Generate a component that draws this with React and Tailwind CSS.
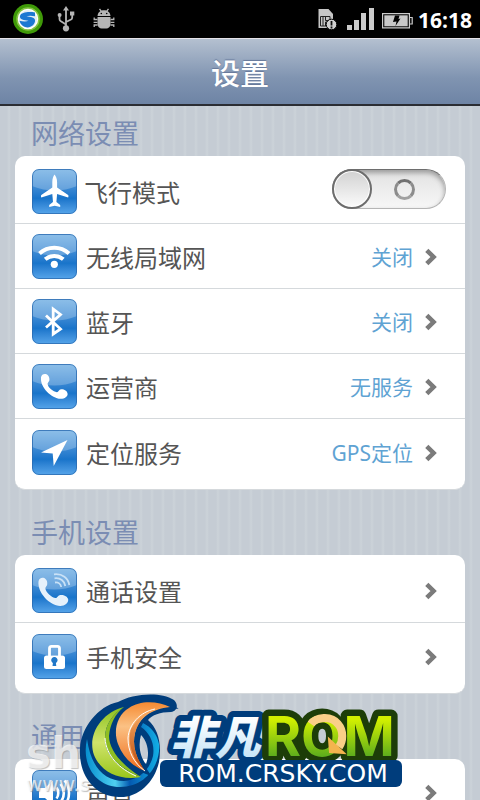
import React, { useState } from "react";

const networkRows = [
  { id: "wifi", label: "无线局域网", value: "关闭" },
  { id: "bluetooth", label: "蓝牙", value: "关闭" },
  { id: "carrier", label: "运营商", value: "无服务" },
  { id: "location", label: "定位服务", value: "GPS定位" },
];

const phoneRows = [
  { id: "call", label: "通话设置" },
  { id: "security", label: "手机安全" },
];

const generalRows = [{ id: "sound", label: "声音" }];

// White glyphs, all drawn on a 45x45 tile
const glyphs = {
  airplane: (
    <path
      fill="#fff"
      d="M22.5 5.5c1.5 1.8 2.6 4.4 2.6 7.500v5.500l11 7.600c.5.500.5 1.600 0 2.400l-11-3.500-.7 8 3.800 3v2l-5.500-1.200-5.500 1.200v-2l3.800-3-.7-8-11 3.500c-.5-.8-.5-1.900 0-2.400l11-7.600V13c0-3.100.9-5.700 2.200-7.500z"
    />
  ),
  wifi: (
    <g fill="none" stroke="#fff" strokeWidth="4">
      <path d="M7.500 19.500a22 22 0 0 1 29.500 0" />
      <path d="M13.200 25.300a13.800 13.800 0 0 1 18.100 0" />
      <circle cx="22.300" cy="30.300" r="3.600" fill="#fff" stroke="none" />
    </g>
  ),
  bluetooth: (
    <path
      fill="none"
      stroke="#fff"
      strokeWidth="2.800"
      d="M14 16.500l14.500 13.500-7.300 5V10l7.300 5.500L14 28.500"
    />
  ),
  carrier: (
    <path
      fill="#fff"
      d="M9 13.500c.3-2.800 2.500-3.800 4.500-3.500 2.800.5 4.300 3.700 3.900 6.300-.3 1.700-1.900 2.300-1.800 3.700.3 3.500 5.700 7.700 9.300 8.200 1.600.1 2-2.600 4.100-2.900 2.800-.3 6.200 1.400 6.600 4.400.3 2.900-3.100 5.200-7 5.100C19.500 34.600 8 23.500 9 13.500z"
    />
  ),
  location: <path fill="#fff" d="M35.500 10L21.700 36l-1-12.600L9 22.500z" />,
  call: (
    <>
      <path
        fill="#e6f1fb"
        d="M6.500 13.500c.4-3 2.600-4 4.800-3.700 3 .6 4.400 4 3.900 6.700-.3 1.800-1.900 2.500-1.800 4 .3 3.800 6.200 9.200 10.300 9.500 1.800.1 2.300-2.800 4.600-3 3.600-.3 7.400 1.300 7.900 4.600.3 3.500-3.400 6.500-8 6.400C17.500 37.500 5.300 24.500 6.500 13.500z"
      />
      <g fill="none" stroke="#c9e1f6" strokeWidth="1.800">
        <path d="M23 14.500c3.200-.4 5.800 1.500 6.200 4.500" />
        <path d="M22.500 10.300c6-.8 10 2.800 10.800 7.700" />
        <path d="M22 6.300c8.500-1 14.200 4 15.300 10.700" />
      </g>
    </>
  ),
  security: (
    <>
      <path
        fill="none"
        stroke="#fff"
        strokeWidth="2.800"
        d="M17.500 23v-8.500c0-1.500.7-2.200 2-2.200h6c1.300 0 2 .7 2 2.200V23"
      />
      <rect x="12" y="21.500" width="21" height="13.500" rx="2.500" fill="#fff" />
      <path fill="#2178c9" d="M20.500 32l.4-3a3.200 3.200 0 1 1 3 0l.4 3z" />
    </>
  ),
  sound: (
    <>
      <path fill="#fff" d="M7 18h6l8-7.500v25L13 28H7z" />
      <g fill="none" stroke="#fff" strokeWidth="2.600">
        <path d="M24.500 17.500c2.400 3 2.400 8 0 11" />
        <path d="M28.500 14c4.400 5 4.400 13 0 18" />
        <path d="M32.500 10.500c6 7 6 18 0 25" />
      </g>
    </>
  ),
};

function Tile({ name }) {
  return (
    <svg
      viewBox="0 0 45 45"
      className="size-[45px] shrink-0 rounded-[7px] bg-linear-to-b from-[#69abe2] via-[#1874ca] via-65% to-[#56a5ea]"
      aria-hidden="true"
    >
      <path d="M0 0h45v17Q22.500 26 0 17z" fill="#fff" opacity=".24" />
      {glyphs[name]}
      <rect
        x=".5"
        y=".5"
        width="44"
        height="44"
        rx="6.500"
        fill="none"
        stroke="#2c6cb0"
        strokeOpacity=".8"
      />
    </svg>
  );
}

function Chevron() {
  return (
    <svg viewBox="0 0 12 18" className="h-[18px] w-3 shrink-0" aria-hidden="true">
      <path
        d="M1.800 2.300L8.600 9l-6.800 6.700"
        fill="none"
        stroke="#7b7b7b"
        strokeWidth="4.500"
      />
    </svg>
  );
}

function Row({ row }) {
  return (
    <li className="border-b border-[#d5d9dc] pt-2.5 pb-[9px] first:pt-[13px] last:border-b-0 last:pt-[11px] last:pb-3.5">
      <button type="button" className="flex w-full items-center pr-7 pl-[17px] text-left">
        <Tile name={row.id} />
        <span className="ml-[9px] flex-1 pt-0.5 text-2xl leading-8 text-[#555]">
          {row.label}
        </span>
        {row.value && (
          <span className="mr-3 text-[21px] leading-8 text-[#5fa3d3]">
            {row.value}
          </span>
        )}
        <Chevron />
      </button>
    </li>
  );
}

function Section({ title, rows, children }) {
  return (
    <section className="mb-[15px]">
      <h2 className="flex h-[50px] items-center pt-1.5 pl-4 text-[27px] leading-9 text-[#7b8db3]">
        {title}
      </h2>
      <ul className="overflow-hidden rounded-[10px] border-b border-[#d5d9dc] bg-white">
        {children}
        {rows.map((row) => (
          <Row key={row.id} row={row} />
        ))}
      </ul>
    </section>
  );
}

function AirplaneRow() {
  const [on, setOn] = useState(false);

  return (
    <li className="flex items-center border-b border-[#d5d9dc] pt-[13px] pr-[19px] pb-[9px] pl-[17px]">
      <Tile name="airplane" />
      <label
        htmlFor="airplane"
        className="ml-[7px] flex-1 pt-0.5 text-2xl leading-8 text-[#555]"
      >
        飞行模式
      </label>
      <span className="grid h-10 w-[114px] items-center self-start">
        <input
          id="airplane"
          type="checkbox"
          checked={on}
          onChange={(e) => setOn(e.target.checked)}
          className="peer col-start-1 row-start-1 h-10 w-full appearance-none rounded-full border border-[#b5b5b5] border-t-[#6e6e6e] bg-linear-to-b from-[#e2e2e2] to-[#f7f7f7] shadow-[inset_0_3px_5px_#9c9c9c]"
        />
        {/* the "off" ring */}
        <span className="pointer-events-none col-start-1 row-start-1 mr-[31px] size-[21px] justify-self-end rounded-full border-3 border-[#8c8c8c] border-t-[#707070] border-b-[#a0a0a0] peer-checked:mr-[70px]" />
        <span className="pointer-events-none col-start-1 row-start-1 size-10 rounded-full border-2 border-[#6d6d6d] bg-linear-to-b from-[#d2d2d2] to-[#fbfbfb] shadow-[inset_0_0_0_1px_#fff] peer-checked:justify-self-end" />
      </span>
    </li>
  );
}

function StatusBar() {
  return (
    <div className="flex h-[38px] items-center bg-black pr-2 pl-[13px]">
      {/* Security app */}
      <svg viewBox="0 0 30 30" className="size-[30px]" aria-hidden="true">
        <circle cx="15" cy="15" r="15" fill="#3f9a08" />
        <circle cx="15" cy="15" r="11" fill="#fff" stroke="#85c445" strokeWidth="1.500" />
        <circle cx="15" cy="15" r="9" fill="#e3edf5" />
        <path
          d="M22 8.500c-6-1-14-.5-15 3.500-.6 3.800 4 4 8.500 4.800-2 1-6 .8-9 0 1 4.500 5 6.700 8 6.700 4-.2 8-3.500 7.500-7.500-.5-3-5-3-8.500-3.700 2-.8 5.500-.7 8.500 0z"
          fill="#1c78d2"
        />
      </svg>
      {/* USB */}
      <svg viewBox="0 0 18 26" className="ml-3.5 h-[26px] w-[18px]" aria-hidden="true">
        <g fill="none" stroke="#b5b5b5" strokeWidth="1.800">
          <path d="M9 3v20M9 18.500l-5.500-3.500c-.7-.5-1-1-1-2V10M9 16l5-2.500c.9-.5 1.200-1 1.200-2V8" />
        </g>
        <g fill="#b5b5b5">
          <path d="M9 0l3 4.500H6z" />
          <circle cx="9" cy="22.300" r="3.100" />
          <circle cx="2.600" cy="9" r="2" />
          <path d="M13 5.500h4.300v4H13z" />
        </g>
      </svg>
      {/* Debugging */}
      <svg viewBox="0 0 22 22" className="ml-[18px] size-[22px]" aria-hidden="true">
        <g fill="#b5b5b5">
          <path d="M4.500 8c.3-3.800 3-5.800 6.500-5.800s6.200 2 6.500 5.800z" />
          <path d="M4.500 9h13v7.500c0 2.300-2.200 4-4 4h-5c-1.800 0-4-1.700-4-4z" />
        </g>
        <g fill="none" stroke="#b5b5b5" strokeWidth="1.300">
          <path d="M6.500.800l1.700 2.400M15.500.800l-1.700 2.400M4.500 11.500H1.200V9.500M4.500 14.300H.600M4.500 17H1.200v2M17.500 11.500h3.300V9.500M17.500 14.300h3.900M17.500 17h3.300v2" />
        </g>
        <circle cx="8.300" cy="5.500" r=".8" />
        <circle cx="13.700" cy="5.500" r=".8" />
      </svg>
      {/* SIM warning */}
      <svg viewBox="0 0 19 22" className="ml-auto h-[22px] w-[19px]" aria-hidden="true">
        <path d="M.500 1h10l4.500 5v14H.500z" fill="#c6c6c6" />
        <path
          d="M2.500 8.500h9.500v9.500h-9.500zM5 8.500V18M7.500 8.500v4h5M7.500 18v-4h2"
          fill="none"
          stroke="#222"
        />
        <circle cx="13.500" cy="16.500" r="5.300" fill="#d0d0d0" stroke="#000" />
        <path d="M13.500 13v4.500M13.500 18.500v2" stroke="#111" strokeWidth="1.800" />
      </svg>
      {/* Signal */}
      <svg viewBox="0 0 27 22" className="ml-2.5 h-[22px] w-[27px]" aria-hidden="true">
        <path
          d="M0 17h5v5H0zM7 12h5v10H7zM14 5h5v17h-5zM22 0h5v22h-5z"
          fill="#cbcbcb"
        />
      </svg>
      {/* Charging battery */}
      <svg viewBox="0 0 31 16" className="mt-1 ml-2 h-4 w-[31px]" aria-hidden="true">
        <path
          d="M.600.600h26.800v14.300H.600zM27.500 4.500h2.700v6.500h-2.700z"
          fill="none"
          stroke="#cbcbcb"
          strokeWidth="1.200"
        />
        <path d="M2.300 2.300h23.400v11H2.300z" fill="#c8c8c8" />
        <path d="M13 2.500h4.500l-1 3.500 2-.5-5 7.500 1-4.500-3.500.500z" fill="#000" />
      </svg>
      <time className="ml-[5px] pt-0.5 font-['Open_Sans',sans-serif] text-[21px] leading-6 font-bold text-white">
        16:18
      </time>
    </div>
  );
}

// Site banner that floats over the bottom of the list
function Banner() {
  return (
    <div className="pointer-events-none absolute inset-x-0 bottom-0 flex justify-center">
      <svg viewBox="75 692 330 108" className="h-[108px] w-[330px]">
        <defs>
          <linearGradient id="orange" x1="0" y1="0" x2="0" y2="1">
            <stop offset="0" stopColor="#f58a32" />
            <stop offset=".35" stopColor="#fbc184" />
            <stop offset="1" stopColor="#ee6c1c" />
          </linearGradient>
          <linearGradient id="orangeDark" x1="0" y1="0" x2="0" y2="1">
            <stop offset="0" stopColor="#fbb067" />
            <stop offset="1" stopColor="#b8470b" />
          </linearGradient>
          <linearGradient id="lime" x1="0" y1="0" x2="0" y2="1">
            <stop offset="0" stopColor="#8cc21f" />
            <stop offset=".5" stopColor="#cfe36a" />
            <stop offset="1" stopColor="#9ac61c" />
          </linearGradient>
          <linearGradient id="ring" x1="0" y1="0" x2="1" y2="0">
            <stop offset="0" stopColor="#0790d0" />
            <stop offset=".4" stopColor="#4fd0f0" />
            <stop offset=".6" stopColor="#0459b0" />
            <stop offset="1" stopColor="#12b0e6" />
          </linearGradient>
          <linearGradient id="ice" x1="0" y1="0" x2="0" y2="1">
            <stop offset="0.200" stopColor="#fff" />
            <stop offset="1" stopColor="#b9def5" />
          </linearGradient>
          <linearGradient id="green" x1="0" y1="0" x2="0" y2="1">
            <stop offset=".25" stopColor="#d2f000" />
            <stop offset=".8" stopColor="#5fae1c" />
          </linearGradient>
        </defs>

        {/* Swirl */}
        <path
          fill="#003d7c"
          fillRule="evenodd"
          d="M80 748C81 728 98 706 118 702C132 694 160 691 174 700C179 705 177 711 171 712C160 712 152 715 148 720C158 729 162 743 159 762C154 784 137 798 119 797C96 797 78 776 80 748zM141 735C138 745 140 757 146 764C150 754 148 742 141 735z"
        />
        <path
          fill="url(#ring)"
          d="M87 739C81 765 96 787 120 787C146 787 161 764 159 744C157 734 151 727 143 723L141 727C150 733 155 744 153 756C149 772 137 780 124 781C104 781 91 767 87 739z"
        />
        <path
          fill="url(#lime)"
          d="M124 707C101 713 87 735 94 755C101 772 119 781 141 777C118 768 105 755 105 738C105 724 113 714 124 707z"
        />
        <path
          fill="#8fbe22"
          d="M124 707C113 714 105 724 105 738C106 756 120 769 141 777C122 765 109 750 109 736C110 724 115 714 124 707z"
        />
        <path
          fill="url(#orange)"
          stroke="#003d7c"
          strokeWidth="5"
          paintOrder="stroke"
          d="M170 707C158 701 140 700 129 708C117 715 113 731 118 744C123 757 132 766 145 771C136 758 132 746 135 733C139 717 152 709 170 707z"
        />
        <path
          fill="url(#orangeDark)"
          d="M162 708C146 711 137 718 131 729C127 742 132 759 145 771C136 758 132 746 135 733C139 719 148 711 162 708z"
        />
        <path
          fill="none"
          stroke="#fff"
          strokeWidth="1"
          d="M155 709C140 712 129 724 128 738C128 752 134 763 145 771M105 738C106 756 120 769 136 776"
        />

        <text
          x="170"
          y="754"
          className="text-[45px] font-black"
          fontStyle="italic"
          fill="url(#ice)"
          stroke="#003d7c"
          strokeWidth="12"
          strokeLinejoin="round"
          paintOrder="stroke"
        >
          非凡
        </text>
        <text
          x="265"
          y="756"
          className="font-[Inter,sans-serif] text-[55px] font-bold"
          fill="url(#green)"
          stroke="#1d3d08"
          strokeWidth="13"
          strokeLinejoin="round"
          paintOrder="stroke"
        >
          ROM
        </text>
        <path
          d="M311 724C316 717 331 715 338 724C344 731 343 741 339 747"
          fill="none"
          stroke="#f9cf88"
          strokeWidth="8"
        />
        <path d="M329 739l15 14-14-1z" fill="#f4b44e" stroke="#f4b44e" strokeWidth="2" />
        <rect x="160" y="760" width="242" height="27" rx="6" fill="#003d7c" />
        <text
          x="283"
          y="782"
          textAnchor="middle"
          className="font-['DejaVu_Sans',sans-serif] text-[25px]"
          fill="#fff"
        >
          ROM.CRSKY.COM
        </text>
      </svg>
    </div>
  );
}

function App() {
  return (
    <div className="relative flex h-screen flex-col overflow-hidden bg-[#c5ccd4] font-['Noto_Sans','Noto_Sans_CJK_SC',sans-serif]">
      <StatusBar />
      <header className="flex h-[68px] shrink-0 items-center justify-center border-t border-b-2 border-t-[#e4e2e8] border-b-[#2b2d33] bg-linear-to-b from-[#b4c0d0] via-[#8094b1] via-60% to-[#6e84a5]">
        <h1 className="pt-1 text-[29px] leading-10 font-medium text-white [text-shadow:0_-1px_1px_#66789a]">
          设置
        </h1>
      </header>

      <main className="min-h-0 flex-1 overflow-hidden bg-[repeating-linear-gradient(90deg,#c5ccd4_0px,#c5ccd4_7px,#ccd3d9_9px,#c5ccd4_11px)] px-[15px]">
        <Section title="网络设置" rows={networkRows}>
          <AirplaneRow />
        </Section>
        <Section title="手机设置" rows={phoneRows} />
        <Section title="通用" rows={generalRows} />
      </main>

      {/* Site watermark */}
      <div className="pointer-events-none absolute bottom-1 left-[26px] text-white/70 [text-shadow:1px_1px_1px_#88888888]">
        <p className="font-['DejaVu_Sans',sans-serif] text-[42px] leading-9 font-bold">sh</p>
        <p className="font-['DejaVu_Sans',sans-serif] text-xl leading-6">www.s</p>
      </div>
      <Banner />
    </div>
  );
}

export default App;
